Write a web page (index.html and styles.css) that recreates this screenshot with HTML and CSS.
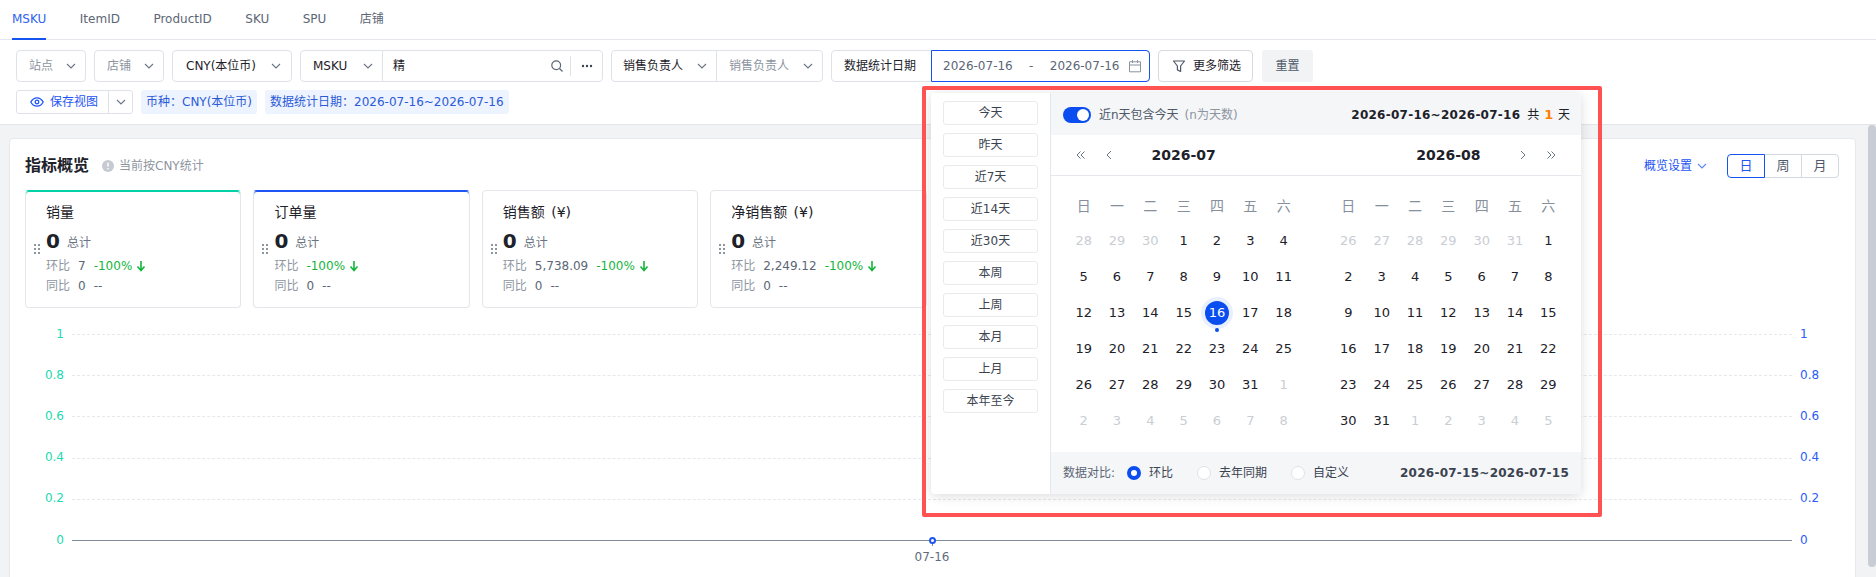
FILE: index.html
```html
<!DOCTYPE html>
<html lang="zh-CN">
<head>
<meta charset="utf-8">
<title>指标概览</title>
<link rel="stylesheet" href="styles.css">
</head>
<body>
<svg class="defs" width="0" height="0" aria-hidden="true">
  <symbol id="chev" viewBox="0 0 10 10"><path d="M1 3l4 4 4-4" fill="none" stroke="currentColor" stroke-width="1.1"/></symbol>
  <symbol id="down" viewBox="0 0 10 12"><path d="M5 1v9M1.5 6.5L5 10.5 8.500 6.5" fill="none" stroke="currentColor" stroke-width="1.6"/></symbol>
  <symbol id="dleft" viewBox="0 0 10 10"><path d="M4.500 1.500L1 5l3.500 3.500M8.500 1.500L5 5l3.500 3.500" fill="none" stroke="currentColor"/></symbol>
  <symbol id="left" viewBox="0 0 10 10"><path d="M7 1L3 5l4 4" fill="none" stroke="currentColor"/></symbol>
  <symbol id="right" viewBox="0 0 10 10"><path d="M3 1l4 4-4 4" fill="none" stroke="currentColor"/></symbol>
  <symbol id="dright" viewBox="0 0 10 10"><path d="M1.500 1.500L5 5 1.500 8.500M5.500 1.500L9 5 5.500 8.500" fill="none" stroke="currentColor"/></symbol>
</svg>

<header class="top">
  <nav class="tabs">
    <a class="tab is-active">MSKU</a><a class="tab">ItemID</a><a class="tab">ProductID</a><a class="tab">SKU</a><a class="tab">SPU</a><a class="tab">店铺</a>
  </nav>
  <div class="filters">
    <div class="field w-site"><span class="muted">站点</span><svg class="chev"><use href="#chev"/></svg></div>
    <div class="field w-site"><span class="muted">店铺</span><svg class="chev"><use href="#chev"/></svg></div>
    <div class="field w-cny"><span>CNY(本位币)</span><svg class="chev"><use href="#chev"/></svg></div>
    <div class="field w-search">
      <div class="part part-msku"><span>MSKU</span><svg class="chev"><use href="#chev"/></svg></div>
      <div class="part part-input">
        <span class="grow">精</span>
        <svg class="ico-14" viewBox="0 0 14 14"><circle cx="6.2" cy="6.2" r="4.4" fill="none" stroke="#5c6675" stroke-width="1.2"/><path d="M9.5 9.5l3 3" stroke="#5c6675" stroke-width="1.2"/></svg>
        <i class="vline"></i>
        <svg class="ico-dots" viewBox="0 0 12 4"><circle cx="2" cy="2" r="1.2"/><circle cx="6" cy="2" r="1.2"/><circle cx="10" cy="2" r="1.2"/></svg>
      </div>
    </div>
    <div class="field w-owner">
      <div class="part part-owner"><span>销售负责人</span><svg class="chev"><use href="#chev"/></svg></div>
      <div class="part part-owner2"><span class="muted">销售负责人</span><svg class="chev"><use href="#chev"/></svg></div>
    </div>
    <div class="field w-date">
      <div class="date-label">数据统计日期</div>
      <div class="date-input">
        <span>2026-07-16</span><span class="date-sep">-</span><span>2026-07-16</span>
        <svg class="ico-cal" viewBox="0 0 14 14"><path d="M1.5 2.8h11v10h-11zM1.5 6h11M4.5 1v3M9.5 1v3" fill="none" stroke="#8a93a0" stroke-width="1"/></svg>
      </div>
    </div>
    <button class="btn-more">
      <svg class="ico-14" viewBox="0 0 14 14"><path d="M1.5 2h11L8.6 7v5.5l-3.2-1.6V7z" fill="none" stroke="#4e5969" stroke-width="1.2" stroke-linejoin="round"/></svg>
      更多筛选
    </button>
    <button class="btn-reset">重置</button>
  </div>
  <div class="views">
    <div class="save">
      <div class="save-main">
        <svg class="ico-14" viewBox="0 0 14 14"><path d="M.8 7C2.3 4.2 4.4 2.8 7 2.8s4.7 1.4 6.2 4.2c-1.5 2.8-3.600 4.2-6.200 4.2S2.300 9.800.8 7z" fill="none" stroke="#1d54f5" stroke-width="1.3"/><circle cx="7" cy="7" r="1.800" fill="none" stroke="#1d54f5" stroke-width="1.300"/></svg>
        保存视图
      </div>
      <div class="save-more"><svg class="chev"><use href="#chev"/></svg></div>
    </div>
    <span class="tag">币种&#xFF1A;CNY(本位币)</span>
    <span class="tag">数据统计日期&#xFF1A;2026-07-16~2026-07-16</span>
  </div>
</header>

<main class="main">
  <section class="card">
    <div class="card-head">
      <div class="head-left">
        <h2 class="title">指标概览</h2>
        <svg class="ico-info" viewBox="0 0 12 12"><circle cx="6" cy="6" r="6" fill="#c6cad2"/><path d="M6 2.800v3.600M6 8v1.200" stroke="#fff" stroke-width="1.500"/></svg>
        <span class="note">当前按CNY统计</span>
      </div>
      <div class="head-right">
        <span class="setting">概览设置<svg class="chev"><use href="#chev"/></svg></span>
        <div class="seg"><span class="seg-item is-on">日</span><span class="seg-item">周</span><span class="seg-item">月</span></div>
      </div>
    </div>

    <div class="kpis">
      <article class="kpi kpi-teal">
        <div class="grip"><i></i><i></i><i></i><i></i><i></i><i></i></div>
        <div class="kpi-body">
          <div class="kpi-name">销量</div>
          <div class="kpi-val"><b>0</b><span>总计</span></div>
          <div class="kpi-line"><span class="lbl">环比</span><span>7</span><span class="up">-100%</span><svg class="arrow"><use href="#down"/></svg></div>
          <div class="kpi-line"><span class="lbl">同比</span><span>0</span><span>--</span></div>
        </div>
      </article>
      <article class="kpi kpi-blue">
        <div class="grip"><i></i><i></i><i></i><i></i><i></i><i></i></div>
        <div class="kpi-body">
          <div class="kpi-name">订单量</div>
          <div class="kpi-val"><b>0</b><span>总计</span></div>
          <div class="kpi-line"><span class="lbl">环比</span><span class="up">-100%</span><svg class="arrow"><use href="#down"/></svg></div>
          <div class="kpi-line"><span class="lbl">同比</span><span>0</span><span>--</span></div>
        </div>
      </article>
      <article class="kpi">
        <div class="grip"><i></i><i></i><i></i><i></i><i></i><i></i></div>
        <div class="kpi-body">
          <div class="kpi-name">销售额 (¥)</div>
          <div class="kpi-val"><b>0</b><span>总计</span></div>
          <div class="kpi-line"><span class="lbl">环比</span><span>5,738.09</span><span class="up">-100%</span><svg class="arrow"><use href="#down"/></svg></div>
          <div class="kpi-line"><span class="lbl">同比</span><span>0</span><span>--</span></div>
        </div>
      </article>
      <article class="kpi">
        <div class="grip"><i></i><i></i><i></i><i></i><i></i><i></i></div>
        <div class="kpi-body">
          <div class="kpi-name">净销售额 (¥)</div>
          <div class="kpi-val"><b>0</b><span>总计</span></div>
          <div class="kpi-line"><span class="lbl">环比</span><span>2,249.12</span><span class="up">-100%</span><svg class="arrow"><use href="#down"/></svg></div>
          <div class="kpi-line"><span class="lbl">同比</span><span>0</span><span>--</span></div>
        </div>
      </article>
    </div>

    <div class="chart">
      <div class="row"><span class="yl">1</span><i class="grid"></i><span class="yr">1</span></div>
      <div class="row"><span class="yl">0.8</span><i class="grid"></i><span class="yr">0.8</span></div>
      <div class="row"><span class="yl">0.6</span><i class="grid"></i><span class="yr">0.6</span></div>
      <div class="row"><span class="yl">0.4</span><i class="grid"></i><span class="yr">0.4</span></div>
      <div class="row"><span class="yl">0.2</span><i class="grid"></i><span class="yr">0.2</span></div>
      <div class="row"><span class="yl">0</span><i class="base"><em class="point"></em></i><span class="yr">0</span></div>
      <div class="xrow"><span></span><span class="xl">07-16</span><span></span></div>
    </div>
  </section>
  <div class="scrollbar"></div>
</main>

<aside class="popup">
  <div class="quick">
    <button>今天</button><button>昨天</button><button>近7天</button><button>近14天</button><button>近30天</button><button>本周</button><button>上周</button><button>本月</button><button>上月</button><button>本年至今</button>
  </div>
  <div class="cal">
    <div class="cal-top">
      <i class="toggle"></i>
      <span class="tog-text">近n天包含今天</span>
      <span class="tog-hint">(n为天数)</span>
      <span class="range-top"><b class="range">2026-07-16~2026-07-16</b><span class="total">共 <b class="orange">1</b> 天</span></span>
    </div>
    <div class="cal-nav">
      <div class="mhead">
        <span class="arrows"><svg class="nav-ico"><use href="#dleft"/></svg><svg class="nav-ico"><use href="#left"/></svg></span>
        <b class="mtitle">2026-07</b>
        <span></span>
      </div>
      <div class="mhead">
        <span></span>
        <b class="mtitle">2026-08</b>
        <span class="arrows arrows-r"><svg class="nav-ico"><use href="#right"/></svg><svg class="nav-ico"><use href="#dright"/></svg></span>
      </div>
    </div>
    <div class="months">
      <div class="month">
        <span class="wd">日</span><span class="wd">一</span><span class="wd">二</span><span class="wd">三</span><span class="wd">四</span><span class="wd">五</span><span class="wd">六</span>
        <span class="off">28</span><span class="off">29</span><span class="off">30</span><span>1</span><span>2</span><span>3</span><span>4</span>
        <span>5</span><span>6</span><span>7</span><span>8</span><span>9</span><span>10</span><span>11</span>
        <span>12</span><span>13</span><span>14</span><span>15</span><span><u class="sel">16</u></span><span>17</span><span>18</span>
        <span>19</span><span>20</span><span>21</span><span>22</span><span>23</span><span>24</span><span>25</span>
        <span>26</span><span>27</span><span>28</span><span>29</span><span>30</span><span>31</span><span class="off">1</span>
        <span class="off">2</span><span class="off">3</span><span class="off">4</span><span class="off">5</span><span class="off">6</span><span class="off">7</span><span class="off">8</span>
      </div>
      <div class="month">
        <span class="wd">日</span><span class="wd">一</span><span class="wd">二</span><span class="wd">三</span><span class="wd">四</span><span class="wd">五</span><span class="wd">六</span>
        <span class="off">26</span><span class="off">27</span><span class="off">28</span><span class="off">29</span><span class="off">30</span><span class="off">31</span><span>1</span>
        <span>2</span><span>3</span><span>4</span><span>5</span><span>6</span><span>7</span><span>8</span>
        <span>9</span><span>10</span><span>11</span><span>12</span><span>13</span><span>14</span><span>15</span>
        <span>16</span><span>17</span><span>18</span><span>19</span><span>20</span><span>21</span><span>22</span>
        <span>23</span><span>24</span><span>25</span><span>26</span><span>27</span><span>28</span><span>29</span>
        <span>30</span><span>31</span><span class="off">1</span><span class="off">2</span><span class="off">3</span><span class="off">4</span><span class="off">5</span>
      </div>
    </div>
    <div class="cal-foot">
      <span class="cmp">数据对比:</span>
      <label class="radio"><i class="dot is-on"></i>环比</label>
      <label class="radio"><i class="dot"></i>去年同期</label>
      <label class="radio"><i class="dot"></i>自定义</label>
      <b class="range range-foot">2026-07-15~2026-07-15</b>
    </div>
  </div>
</aside>
<div class="frame"></div>
</body>
</html>
```

FILE: styles.css
```css
* { box-sizing: border-box; }
html, body { margin: 0; padding: 0; }
body {
  position: relative;
  width: 1876px;
  height: 577px;
  overflow: hidden;
  background: #fff;
  color: #1d2129;
  font: 12px/20px "DejaVu Sans", "Noto Sans CJK SC", sans-serif;
}
.defs { position: absolute; }
button { font: inherit; color: inherit; background: #fff; padding: 0; cursor: pointer; }
b { font-weight: 700; }
i, em, u { font-style: normal; text-decoration: none; }
.chev { width: 10px; height: 10px; color: #6b7482; flex: none; }
.muted { color: #8d95a1; }
.grow { flex: 1; }

/* top */
.top { height: 125px; border-bottom: 1px solid #e3e5ea; }
.tabs { display: flex; gap: 33.5px; height: 40px; padding-left: 12px; border-bottom: 1px solid #e5e7ec; }
.tab { height: 40px; line-height: 38px; color: #5c6675; border-bottom: 2px solid transparent; }
.tab.is-active { color: #2f63ee; border-bottom-color: #1554f0; }

.filters { display: flex; gap: 8px; padding: 10px 0 0 16px; height: 42px; }
.field { display: flex; align-items: center; height: 32px; border: 1px solid #dfe2e8; border-radius: 4px; background: #fff; }
.w-site { width: 70px; padding: 0 9px 0 12px; justify-content: space-between; }
.w-cny { width: 120px; padding: 0 10px 0 13px; justify-content: space-between; }
.w-search { width: 303px; }
.w-owner { width: 212px; }
.w-date { width: 319px; }
.part { display: flex; align-items: center; height: 100%; }
.part-msku { width: 82px; padding: 0 9px 0 12px; justify-content: space-between; border-right: 1px solid #dfe2e8; }
.part-input { flex: 1; padding: 0 9px 0 10px; }
.vline { width: 1px; height: 20px; background: #dfe2e8; margin: 0 10px 0 6px; }
.ico-14 { width: 14px; height: 14px; flex: none; }
.ico-dots { width: 12px; height: 4px; fill: #3b4350; }
.part-owner { width: 105px; padding: 0 9px 0 11px; justify-content: space-between; border-right: 1px solid #dfe2e8; }
.part-owner2 { flex: 1; padding: 0 9px 0 12px; justify-content: space-between; }
.date-label { width: 99px; padding-left: 12px; }
.date-input {
  flex: 1; height: 32px; margin: -1px -1px -1px 0;
  display: flex; align-items: center; padding: 0 7px 0 11px;
  border: 1px solid #1554f0; border-radius: 0 4px 4px 0; color: #5c6675;
}
.date-sep { width: 37px; text-align: center; }
.ico-cal { width: 14px; height: 14px; margin-left: auto; }
.btn-more { display: flex; align-items: center; gap: 7px; width: 95px; height: 32px; padding-left: 13px; border: 1px solid #d6d9df; border-radius: 4px; }
.btn-reset { width: 51px; height: 32px; border: 0; border-radius: 3px; background: #f2f3f5; color: #4e5969; margin-left: 1px; }

.views { display: flex; gap: 8px; padding: 8px 0 0 16px; }
.save { display: flex; width: 117px; height: 24px; border: 1px solid #dfe2e8; border-radius: 3px; }
.save-main { width: 92px; display: flex; align-items: center; gap: 6px; padding-left: 13px; color: #1d54f5; border-right: 1px solid #dfe2e8; }
.save-more { flex: 1; display: flex; align-items: center; justify-content: center; }
.tag { height: 24px; line-height: 24px; padding: 0 5px; background: #edf3ff; color: #2b5bd8; border-radius: 3px; }

/* main */
.main { display: flex; align-items: flex-start; height: 452px; padding-left: 9px; background: #f2f3f5; }
.card { flex: none; width: 1847px; height: 460px; margin-top: 13px; padding: 11px 15px 0; background: #fff; border: 1px solid #e6e8ec; border-radius: 4px; }
.scrollbar { flex: none; width: 8px; height: 442px; margin-left: 12px; background: #c8ccd4; border-radius: 4px; }
.card-head { display: flex; justify-content: space-between; align-items: center; height: 32px; }
.head-left { display: flex; align-items: center; }
.title { margin: 0 13px 0 0; font-size: 16px; font-weight: 700; line-height: 24px; color: #1d2129; }
.ico-info { width: 12px; height: 12px; margin-right: 5px; }
.note { color: #8d95a1; }
.head-right { display: flex; align-items: center; padding-right: 1px; }
.setting { display: flex; align-items: center; gap: 5px; color: #1d54f5; margin-right: 20px; }
.setting .chev { color: #5f86ee; }
.seg { display: flex; width: 112px; height: 24px; }
.seg-item { flex: 1; line-height: 22px; font-size: 13px; text-align: center; color: #4e5969; border: 1px solid #d4d8df; margin-left: -1px; }
.seg-item:first-child { border-radius: 4px 0 0 4px; margin-left: 0; }
.seg-item:last-child { border-radius: 0 4px 4px 0; }
.seg-item.is-on { color: #1d54f5; border-color: #1554f0; position: relative; z-index: 1; }

.kpis { display: flex; gap: 12px; margin-top: 8px; }
.kpi { display: flex; align-items: center; flex: none; width: 216.4px; height: 118px; padding: 0 0 1px 8px; border: 1px solid #e5e6eb; border-radius: 4px; }
.kpi-teal { border-top-color: #00d1a7; box-shadow: inset 0 1px 0 #00d1a7; }
.kpi-blue { border-top-color: #1d54f5; box-shadow: inset 0 1px 0 #1d54f5; }
.grip { display: grid; grid-template-columns: 2px 2px; gap: 2px; width: 12px; }
.grip i { width: 2px; height: 2px; background: #8d95a1; }
.kpi-body { display: flex; flex-direction: column; }
.kpi-name { font-size: 14px; line-height: 20px; margin-bottom: 5px; color: #1d2129; word-spacing: 2px; }
.kpi-val { display: flex; align-items: center; height: 28px; margin-bottom: 1px; gap: 7px; color: #6b7482; }
.kpi-val b { font-size: 20px; color: #1d2129; }
.kpi-val span { padding-top: 5px; }
.kpi-line { display: flex; align-items: center; gap: 8px; height: 20px; color: #5c6675; }
.lbl { color: #8d95a1; }
.up { color: #14b53c; }
.arrow { width: 10px; height: 12px; margin-left: -4px; color: #14b53c; }

.chart { margin-top: 6px; }
.row { display: grid; grid-template-columns: 39px 1720px 60px; column-gap: 8px; align-items: center; height: 41.2px; }
.yl { text-align: right; color: #1ed8b0; padding-bottom: 2px; }
.yr { color: #2c5cf6; padding-bottom: 2px; }
.grid { display: block; height: 1px; border-top: 1px dashed #e6e8ec; }
.base { display: block; position: relative; height: 1px; background: #7f8a9a; }
.base::after { content: ""; position: absolute; left: 50%; top: 1px; width: 1px; height: 5px; background: #7f8a9a; }
.point { position: absolute; z-index: 1; left: 50%; top: -3px; width: 7px; height: 7px; margin-left: -3px; border: 2px solid #1d54f5; border-radius: 50%; background: #fff; }
.xrow { display: grid; grid-template-columns: 39px 1720px 60px; column-gap: 8px; margin-top: -14px; }
.xl { text-align: center; color: #5f6b7c; }

/* popup */
.popup { position: absolute; left: 931px; top: 93px; width: 650px; height: 401px; display: flex; background: #fff; border-radius: 4px; box-shadow: 0 2px 12px rgba(0,0,0,.14); }
.quick { width: 120px; padding: 8px 12px 0; display: flex; flex-direction: column; gap: 8.5px; border-right: 1px solid #e5e7ec; }
.quick button { width: 95px; height: 23.500px; flex: none; border: 1px solid #e8eaee; border-radius: 3px; color: #3b4350; line-height: 18px; }
.cal { flex: 1; display: flex; flex-direction: column; }
.cal-top { display: flex; align-items: center; height: 42px; padding: 2px 11px 0 12px; background: #f5f6f8; border-radius: 0 4px 0 0; }
.toggle { position: relative; width: 28px; height: 16px; border-radius: 8px; background: #0a4ef0; margin-right: 8px; }
.toggle::after { content: ""; position: absolute; right: 2px; top: 2px; width: 12px; height: 12px; border-radius: 50%; background: #fff; }
.tog-text { color: #4e5969; }
.tog-hint { margin-left: 6px; color: #8d95a1; }
.range-top { margin-left: auto; display: flex; gap: 7px; }
.range { letter-spacing: .26px; }
.total { word-spacing: 1px; }
.orange { color: #ff7d00; font-size: 13px; }
.cal-nav { display: flex; justify-content: space-between; height: 41px; padding: 0 16px; border-bottom: 1px solid #e5e7ec; }
.mhead { display: grid; grid-template-columns: 1fr auto 1fr; align-items: center; width: 233.300px; }
.mtitle { font-size: 14px; color: #1d2129; }
.arrows { display: flex; gap: 18px; padding-left: 9px; color: #6b7482; }
.arrows-r { justify-content: flex-end; padding: 0 9px 0 0; }
.nav-ico { width: 10px; height: 10px; }
.months { display: flex; justify-content: space-between; flex: 1; padding: 12px 16px 0; }
.month { display: grid; grid-template-columns: repeat(7, 33.330px); grid-template-rows: 35px repeat(6, 36px); width: 233.300px; }
.month span { display: flex; align-items: center; justify-content: center; font-size: 13px; color: #1d2129; }
.month .wd { font-size: 14px; color: #86909c; }
.month .off { color: #c9cdd4; }
.sel { position: relative; width: 24px; height: 24px; line-height: 24px; text-align: center; border-radius: 50%; background: #0a4ef0; color: #fff; box-shadow: 0 0 0 4px #e8f0ff; }
.sel::after { content: ""; position: absolute; left: 10px; top: 27px; width: 4px; height: 4px; border-radius: 50%; background: #0a4ef0; }
.cal-foot { display: flex; align-items: center; height: 42px; padding: 0 12px; background: #f5f6f8; border-radius: 0 0 4px 0; color: #3b4350; }
.cmp { width: 64px; color: #5c6675; }
.radio { display: flex; align-items: center; gap: 8px; margin-right: 24px; }
.dot { width: 14px; height: 14px; border-radius: 50%; background: #fff; border: 1px solid #dfe2e8; }
.dot.is-on { border: 4.500px solid #0a4ef0; }
.range-foot { margin-left: auto; }

.frame { position: absolute; left: 922px; top: 86px; width: 680px; height: 431px; border: 4px solid #ff5252; border-radius: 2px; pointer-events: none; }
```
